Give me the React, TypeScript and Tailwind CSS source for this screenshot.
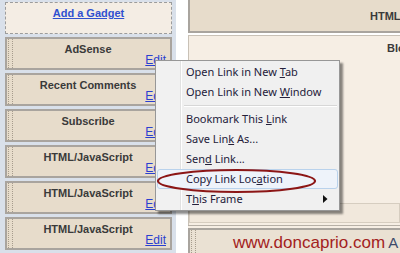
import React from "react";

const Gadget = ({ title }: { title: string }) => (
  <div className="h-[33px] shrink-0 border-2 border-[#a9a49e] bg-[#e7dccb] flex">
    <div className="ml-[1px] w-[5px] h-full border-x border-dotted border-[#a69c8d]" />
    <div className="flex-1 flex flex-col">
      <div className="pt-[3px] pr-[7px] text-center text-[11px] leading-[14px] font-bold text-[#3a3a3a]">{title}</div>
      <div className="-mt-[3px] pr-[4px] flex justify-end">
        <span className="text-[12px] leading-[14px] text-[#2a3fd0] underline">Edit</span>
      </div>
    </div>
  </div>
);

const Item = ({ children, hl, arrow }: { children: React.ReactNode; hl?: boolean; arrow?: boolean }) => (
  <div
    className={
      "h-[20px] flex items-center pl-[28px] text-[#24203a] " +
      (hl ? "bg-[#eef3fa] border border-[#b9d2ec] rounded-[3px]" : "border border-transparent")
    }
  >
    <span>{children}</span>
    {arrow && (
      <svg className="ml-auto mr-[9px]" width="5" height="8" viewBox="0 0 5 8">
        <path d="M0 0 L4.5 4 L0 8 Z" fill="#111" />
      </svg>
    )}
  </div>
);

export default function App() {
  return (
    <div
      className="relative w-[400px] h-[253px] overflow-hidden bg-white flex"
      style={{ fontFamily: '"Liberation Sans", Arial, sans-serif' }}
    >
      {/* Left column */}
      <div className="w-[176px] h-full bg-[#d9e0ea] pl-[5px] pr-[4px] pt-[2px] flex flex-col gap-[3px]">
        <div className="h-[32px] shrink-0 border border-dashed border-[#9c9c9c] bg-[#f4ede4] flex justify-center pt-[3px]">
          <span className="text-[11px] leading-[14px] font-bold text-[#3050d0] underline">Add a Gadget</span>
        </div>
        <Gadget title="AdSense" />
        <Gadget title="Recent Comments" />
        <Gadget title="Subscribe" />
        <Gadget title="HTML/JavaScript" />
        <Gadget title="HTML/JavaScript" />
        <Gadget title="HTML/JavaScript" />
      </div>

      {/* gutter */}
      <div className="w-[12px] h-full bg-white" />

      {/* Right column */}
      <div className="flex-1 h-full flex flex-col overflow-hidden">
        <div className="h-[33px] shrink-0 bg-[#e7dccb] border-l-2 border-b-2 border-[#a9a49e] pl-[180px] pt-[3px]">
          <span className="text-[11px] leading-[14px] font-bold text-[#3a3a3a] whitespace-nowrap">HTML/JavaScript</span>
        </div>
        <div className="h-[2px] shrink-0 bg-white" />
        <div className="h-[190px] shrink-0 bg-[#f6eee4] border-l border-t border-[#c9c1b6] flex flex-col">
          <div className="pl-[198px] pt-[5px] text-[11px] leading-[14px] font-bold text-[#3a3a3a] whitespace-nowrap">Blog Posts</div>
          <div className="mt-auto mb-[2px] h-[20px] bg-[#f1e8dc] border border-[#d6cdc0]" />
        </div>
        <div className="h-[3px] shrink-0 bg-[#f6eee4] border-t border-[#b7b0a7]" />
        <div className="flex-1 bg-[#eae1d3] border-l-2 border-t-2 border-[#a9a49e] flex">
          <div className="ml-[1px] w-[5px] h-full border-x border-dotted border-[#a69c8d]" />
          <div className="pl-[37px] pt-[3px] flex items-baseline whitespace-nowrap">
            <span className="text-[17px] leading-[20px] text-[#a3221d]">www.doncaprio.com</span>
            <span className="ml-[3px] text-[15px] leading-[20px] text-[#3d4a6a]">A</span>
          </div>
        </div>
      </div>

      {/* Context menu */}
      <div
        className="absolute left-[155px] top-[60px] w-[185px] border border-[#979797] p-[1px] flex flex-col shadow-[3px_3px_2px_rgba(0,0,0,0.45)] text-[11px]"
        style={{
          fontFamily: '"Noto Sans", "Open Sans", sans-serif',
        }}
      >
        <div className="absolute inset-0 -z-0 bg-[linear-gradient(to_right,#f1f1f1_24px,#e1e1e1_24px,#e1e1e1_25px,#ffffff_25px,#ffffff_26px,#f0f0f0_26px)]" />
        <div className="relative flex flex-col">
          <Item>Open Link in New <u>T</u>ab</Item>
          <Item>Open Link in New <u>W</u>indow</Item>
          <div className="h-[7px] flex flex-col justify-center pl-[27px] pr-[1px]">
            <div className="h-[1px] bg-[#d7d7d7]" />
            <div className="h-[1px] bg-white" />
          </div>
          <Item>Bookmark This <u>L</u>ink</Item>
          <Item>Save Lin<u>k</u> As...</Item>
          <Item>Sen<u>d</u> Link...</Item>
          <Item hl>Copy Link Loc<u>a</u>tion</Item>
          <Item arrow>T<u>h</u>is Frame</Item>
        </div>
      </div>

      {/* Red ellipse annotation */}
      <svg className="absolute left-[156px] top-[168px]" width="162" height="26" viewBox="0 0 162 26">
        <ellipse cx="80.5" cy="13" rx="78.5" ry="11" fill="none" stroke="#8c1616" strokeWidth="2.2" />
      </svg>
    </div>
  );
}
